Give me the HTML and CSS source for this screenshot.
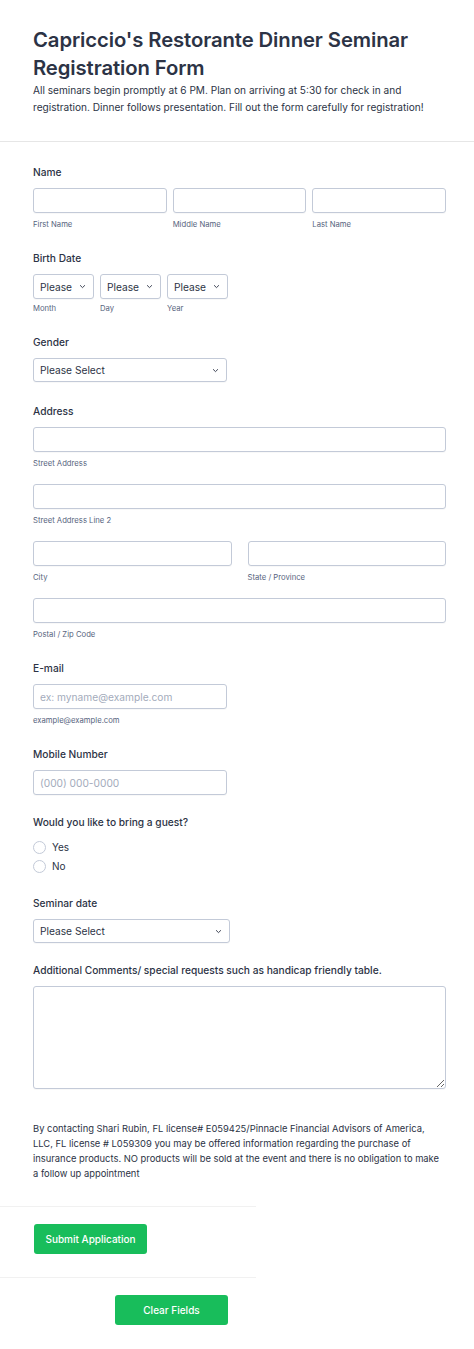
FILE: index.html
```html
<!DOCTYPE html>
<html lang="en">
<head>
    <meta charset="UTF-8">
    <meta name="viewport" content="width=device-width, initial-scale=1.0">
    <title>Capriccio's Restorante Dinner Seminar Registration Form</title>
    <link rel="stylesheet" href="styles.css">
</head>
<body>
    <div class="form-header">
        <h1>Capriccio's Restorante Dinner Seminar Registration Form</h1>
        <p>All seminars begin promptly at 6 PM. Plan on arriving at 5:30 for check in and registration. Dinner follows presentation. Fill out the form carefully for registration!</p>
    </div>

    <form class="form-body">
        <div class="field">
            <label class="field-label">Name</label>
            <div class="row three">
                <div class="sub">
                    <input type="text">
                    <span class="sublabel">First Name</span>
                </div>
                <div class="sub">
                    <input type="text">
                    <span class="sublabel">Middle Name</span>
                </div>
                <div class="sub">
                    <input type="text">
                    <span class="sublabel">Last Name</span>
                </div>
            </div>
        </div>

        <div class="field">
            <label class="field-label">Birth Date</label>
            <div class="row dates">
                <div class="sub">
                    <div class="select-wrap small">
                        <select><option>Please Select</option></select>
                        <svg class="chevron" viewBox="0 0 10 6"><path d="M1.5 1.2 5 4.6 8.5 1.2" /></svg>
                    </div>
                    <span class="sublabel">Month</span>
                </div>
                <div class="sub">
                    <div class="select-wrap small">
                        <select><option>Please Select</option></select>
                        <svg class="chevron" viewBox="0 0 10 6"><path d="M1.5 1.2 5 4.6 8.5 1.2" /></svg>
                    </div>
                    <span class="sublabel">Day</span>
                </div>
                <div class="sub">
                    <div class="select-wrap small">
                        <select><option>Please Select</option></select>
                        <svg class="chevron" viewBox="0 0 10 6"><path d="M1.5 1.2 5 4.6 8.5 1.2" /></svg>
                    </div>
                    <span class="sublabel">Year</span>
                </div>
            </div>
        </div>

        <div class="field gender">
            <label class="field-label">Gender</label>
            <div class="select-wrap half">
                <select><option>Please Select</option></select>
                <svg class="chevron" viewBox="0 0 10 6"><path d="M1.5 1.2 5 4.6 8.5 1.2" /></svg>
            </div>
        </div>

        <div class="field">
            <label class="field-label">Address</label>
            <div class="sub">
                <input type="text">
                <span class="sublabel">Street Address</span>
            </div>
            <div class="sub">
                <input type="text">
                <span class="sublabel">Street Address Line 2</span>
            </div>
            <div class="row two">
                <div class="sub">
                    <input type="text">
                    <span class="sublabel">City</span>
                </div>
                <div class="sub">
                    <input type="text">
                    <span class="sublabel">State / Province</span>
                </div>
            </div>
            <div class="sub">
                <input type="text">
                <span class="sublabel">Postal / Zip Code</span>
            </div>
        </div>

        <div class="field">
            <label class="field-label">E-mail</label>
            <div class="sub">
                <input type="text" class="half" placeholder="ex: myname@example.com">
                <span class="sublabel">example@example.com</span>
            </div>
        </div>

        <div class="field">
            <label class="field-label">Mobile Number</label>
            <input type="text" class="half" placeholder="(000) 000-0000">
        </div>

        <div class="field">
            <label class="field-label">Would you like to bring a guest?</label>
            <label class="radio"><input type="radio" name="guest"> Yes</label>
            <label class="radio"><input type="radio" name="guest"> No</label>
        </div>

        <div class="field">
            <label class="field-label">Seminar date</label>
            <div class="select-wrap seminar">
                <select><option>Please Select</option></select>
                <svg class="chevron" viewBox="0 0 10 6"><path d="M1.5 1.2 5 4.6 8.5 1.2" /></svg>
            </div>
        </div>

        <div class="field">
            <label class="field-label">Additional Comments/ special requests such as handicap friendly table.</label>
            <textarea></textarea>
        </div>

        <p class="disclaimer">By contacting Shari Rubin, FL license# E059425/Pinnacle Financial Advisors of America, LLC, FL license # L059309 you may be offered information regarding the purchase of insurance products. NO products will be sold at the event and there is no obligation to make a follow up appointment</p>

        <div class="button-row">
            <button type="submit" class="btn">Submit Application</button>
        </div>
        <div class="button-row clear-row">
            <button type="reset" class="btn">Clear Fields</button>
        </div>
    </form>
</body>
</html>
```

FILE: styles.css
```css
* {
    box-sizing: border-box;
}
body {
    margin: 0;
    font-family: Inter, "Noto Sans", sans-serif;
    color: #2c3345;
    background: #fff;
}
.form-header {
    padding: 26px 33px 25px;
    border-bottom: 1px solid #e6e6e6;
}
.form-header h1 {
    margin: 0;
    font-size: 20.3px;
    font-weight: 600;
    line-height: 28px;
    letter-spacing: -0.1px;
}
.form-header p {
    margin: 0;
    font-size: 10.1px;
    line-height: 17px;
}
.form-body {
    padding: 22px 28px 0 33px;
}
.field {
    margin-bottom: 19px;
}
.field.gender {
    margin-bottom: 21px;
}
.field-label {
    display: block;
    font-size: 10.2px;
    font-weight: 500;
    line-height: 16px;
    margin-bottom: 8px;
}
.row {
    display: flex;
    gap: 6px;
}
.row.two {
    gap: 16px;
    margin-bottom: 14px;
}
.row.two .sub, .row.three .sub {
    flex: 1;
}
.sub {
    margin-bottom: 14px;
}
.field .sub:last-child, .row .sub {
    margin-bottom: 0;
}
.sublabel {
    display: block;
    margin-top: 6px;
    font-size: 7.7px;
    line-height: 12px;
    color: #57647e;
}
.dates .sublabel {
    margin-top: 4px;
}
input[type="text"], select, textarea {
    display: block;
    width: 100%;
    height: 25px;
    border: 1px solid #c3cad8;
    border-radius: 3px;
    background: #fff;
    font-family: inherit;
    font-size: 10.2px;
    color: #2c3345;
    padding: 0 6px;
    margin: 0;
    box-shadow: 0 1px 1px rgba(0, 0, 0, 0.03);
}
input::placeholder {
    color: #a3abbb;
}
input.half {
    width: 194px;
}
.select-wrap {
    position: relative;
    width: 100%;
}
.select-wrap.small {
    width: 61px;
}
.select-wrap.half {
    width: 194px;
}
.select-wrap.seminar {
    width: 197px;
}
select {
    appearance: none;
    padding-right: 18px;
    height: 25px;
}
.select-wrap.half select, .select-wrap.seminar select {
    height: 24px;
}
.chevron {
    position: absolute;
    right: 8px;
    top: 10px;
    width: 7px;
    height: 5px;
    fill: none;
    stroke: #2c3345;
    stroke-width: 1.3;
    pointer-events: none;
}
.radio {
    display: flex;
    align-items: center;
    gap: 6px;
    font-size: 10px;
    line-height: 19px;
    height: 19px;
    margin-top: 3px;
}
.radio + .radio {
    margin-top: 0;
}
.radio input {
    appearance: none;
    width: 13px;
    height: 13px;
    margin: 0;
    border: 1px solid #c3cad8;
    border-radius: 50%;
    background: #fff;
}
textarea {
    height: 103px;
    resize: vertical;
    padding: 6px 7px;
}
.field:has(textarea) {
    margin-bottom: 32px;
}
.disclaimer {
    margin: 0;
    font-size: 9.4px;
    line-height: 15px;
    color: #2c3345;
}
.button-row {
    width: 256px;
    margin-left: -33px;
    margin-top: 25px;
    padding: 17px 0 23px 34px;
    border-top: 1px solid #f1f1f1;
}
.clear-row {
    margin-top: 0;
    padding: 17px 0 0 115px;
}
.btn {
    display: block;
    width: 113px;
    height: 30px;
    border: none;
    border-radius: 3px;
    background: #18bd5b;
    color: #fff;
    font-family: inherit;
    font-size: 10px;
    font-weight: 500;
    cursor: pointer;
}
```
